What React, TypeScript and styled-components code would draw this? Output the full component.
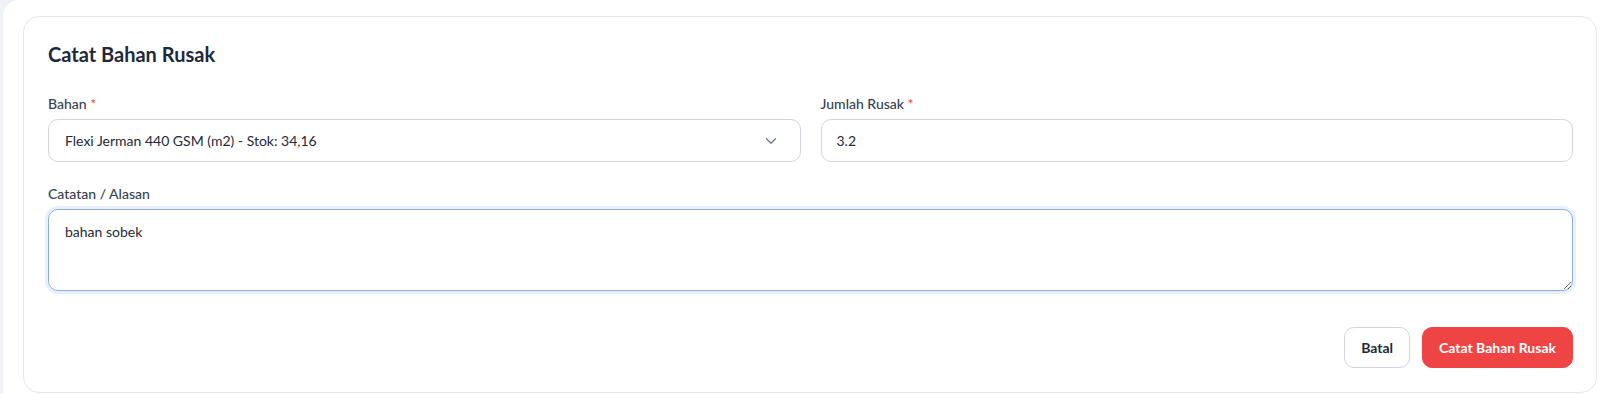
import React, { useEffect, useRef } from 'react';
import styled, { createGlobalStyle } from 'styled-components';
import { ChevronDown } from 'lucide-react';

const GlobalStyle = createGlobalStyle`
  html, body {
    margin: 0;
    padding: 0;
    background: #f1f2f7;
    font-family: Lato, "Noto Sans", sans-serif;
    color: #1f2937;
  }
  * { box-sizing: border-box; }
`;

const App: React.FC = () => {
  const noteRef = useRef<HTMLTextAreaElement>(null);

  useEffect(() => {
    const el = noteRef.current;
    if (el) {
      el.focus();
      el.setSelectionRange(el.value.length, el.value.length);
    }
  }, []);

  return (
    <>
      <GlobalStyle />
      <Page>
        <Card>
          <Title>Catat Bahan Rusak</Title>
          <Grid>
            <Field>
              <Label>
                Bahan <Required>*</Required>
              </Label>
              <SelectBox>
                <span>Flexi Jerman 440 GSM (m2) - Stok: 34,16</span>
                <ChevronDown size={18} strokeWidth={1.6} color="#6b7280" />
              </SelectBox>
            </Field>
            <Field>
              <Label>
                Jumlah Rusak <Required>*</Required>
              </Label>
              <Input defaultValue="3.2" />
            </Field>
            <Field $wide>
              <Label>Catatan / Alasan</Label>
              <TextArea ref={noteRef} defaultValue="bahan sobek " />
            </Field>
          </Grid>
          <Actions>
            <Button>Batal</Button>
            <Button $primary>Catat Bahan Rusak</Button>
          </Actions>
        </Card>
      </Page>
    </>
  );
};

export default App;

const Page = styled.div`
  margin-left: 3px;
  background: #ffffff;
  border-top-left-radius: 16px;
  padding: 16px 11px 1px 20px;
  min-height: 394px;
`;

const Card = styled.section`
  background: #ffffff;
  border: 1px solid #e5e7eb;
  border-radius: 16px;
  padding: 23px 23px 24px 24px;
`;

const Title = styled.h2`
  margin: 0 0 26px;
  font-size: 20px;
  line-height: 28px;
  font-weight: 700;
  color: #1e293b;
`;

const Grid = styled.div`
  display: grid;
  grid-template-columns: 1fr 1fr;
  column-gap: 20px;
  row-gap: 22px;
`;

const Field = styled.div<{ $wide?: boolean }>`
  display: flex;
  flex-direction: column;
  grid-column: ${(p) => (p.$wide ? '1 / -1' : 'auto')};
`;

const Label = styled.label`
  font-size: 14px;
  line-height: 20px;
  font-weight: 500;
  color: #374151;
  margin-bottom: 5px;
`;

const Required = styled.span`
  color: #ef4444;
`;

const SelectBox = styled.div`
  display: flex;
  align-items: center;
  justify-content: space-between;
  height: 43px;
  padding: 0 20px 0 16px;
  border: 1px solid #d1d5db;
  border-radius: 10px;
  font-size: 14px;
  color: #1f2937;
  background: #ffffff;
`;

const Input = styled.input`
  height: 43px;
  padding: 0 15px;
  border: 1px solid #d1d5db;
  border-radius: 10px;
  font-family: inherit;
  font-size: 14px;
  color: #1f2937;
  outline: none;
`;

const TextArea = styled.textarea`
  height: 82px;
  padding: 12px 16px;
  border: 1px solid #8eaede;
  border-radius: 10px;
  box-shadow: 0 0 0 3px #e8f0fe;
  font-family: inherit;
  font-size: 14px;
  line-height: 20px;
  color: #1f2937;
  caret-color: #111827;
  outline: none;
  resize: vertical;
`;

const Actions = styled.div`
  display: flex;
  justify-content: flex-end;
  gap: 12px;
  margin-top: 36px;
`;

const Button = styled.button<{ $primary?: boolean }>`
  height: 41px;
  padding: 0 16px;
  border-radius: 10px;
  font-family: inherit;
  font-size: 14px;
  font-weight: 700;
  cursor: pointer;
  border: 1px solid ${(p) => (p.$primary ? '#ef4444' : '#d1d5db')};
  background: ${(p) => (p.$primary ? '#ef4444' : '#ffffff')};
  color: ${(p) => (p.$primary ? '#ffffff' : '#1f2937')};
`;
